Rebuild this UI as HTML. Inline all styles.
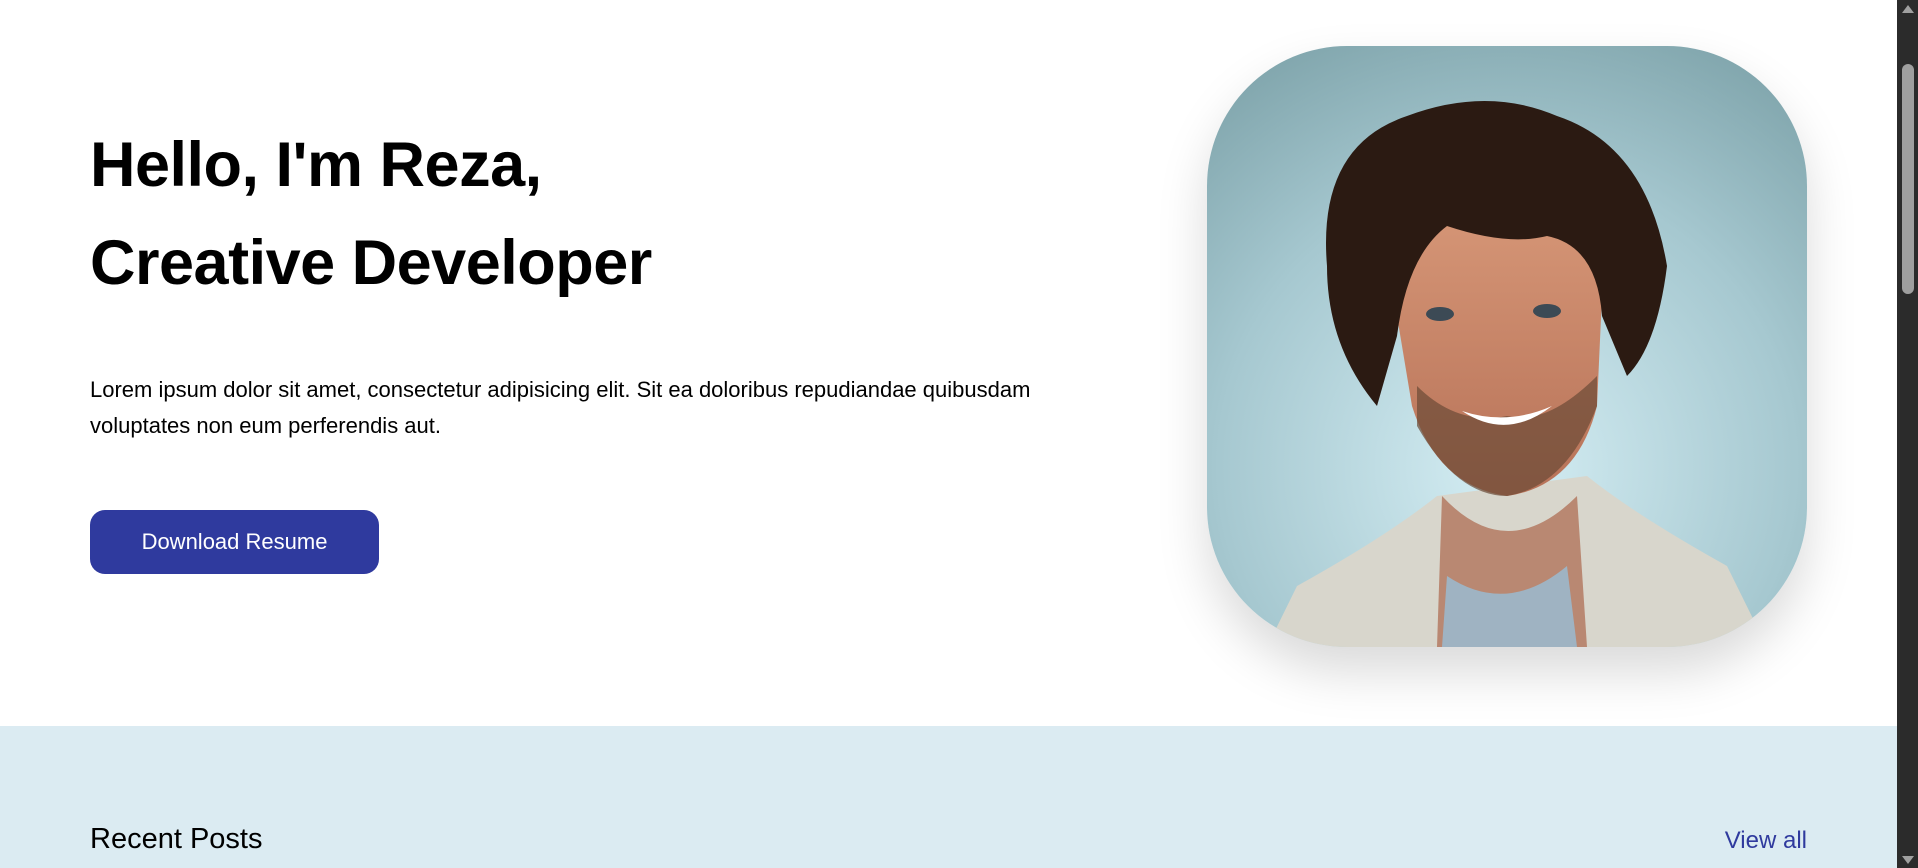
<!DOCTYPE html>
<html><head><meta charset="utf-8"><style>
html,body{margin:0;padding:0;}
body{width:1918px;height:868px;overflow:hidden;position:relative;background:#fff;font-family:"Liberation Sans",Arial,sans-serif;color:#000;}
h1{position:absolute;left:90px;top:116px;margin:0;font-size:63px;font-weight:700;line-height:98px;letter-spacing:-0.5px;}
p{position:absolute;left:90px;top:372px;margin:0;font-size:22px;line-height:36px;width:1000px;}
.btn{position:absolute;left:90px;top:510px;width:289px;height:64px;background:#2f3a9e;border-radius:15px;color:#fff;font-size:22px;line-height:64px;text-align:center;}
.img{position:absolute;left:1207px;top:46px;width:600px;height:601px;border-radius:140px;overflow:hidden;box-shadow:0 25px 50px rgba(0,0,0,0.15);}
.sec{position:absolute;left:0;top:726px;width:1897px;height:142px;background:#dbebf2;}
.rp{position:absolute;left:90px;top:823px;font-size:29px;}
.va{position:absolute;right:111px;top:827px;font-size:24px;color:#2f3a9e;}
.sb{position:absolute;left:1897px;top:0;width:21px;height:868px;background:#2b2b2b;}
.th{position:absolute;left:1902px;top:64px;width:12px;height:230px;background:#9f9f9f;border-radius:6px;}
.ar{position:absolute;left:1902px;top:5px;width:0;height:0;border-left:6px solid transparent;border-right:6px solid transparent;border-bottom:8px solid #a0a0a0;}
.ar2{position:absolute;left:1902px;top:856px;width:0;height:0;border-left:6px solid transparent;border-right:6px solid transparent;border-top:8px solid #a0a0a0;}
</style></head><body>
<h1>Hello, I'm Reza,<br>Creative Developer</h1>
<p>Lorem ipsum dolor sit amet, consectetur adipisicing elit. Sit ea doloribus repudiandae quibusdam voluptates non eum perferendis aut.</p>
<div class="btn">Download Resume</div>
<div class="img"><svg width="600" height="601" viewBox="0 0 600 601">
<defs><radialGradient id="bg" cx="0.5" cy="0.7" r="0.8"><stop offset="0" stop-color="#d5eef4"/><stop offset="0.6" stop-color="#a6c8d0"/><stop offset="1" stop-color="#7fa4ab"/></radialGradient>
<linearGradient id="sk" x1="0" y1="0" x2="0" y2="1"><stop offset="0" stop-color="#d99a7a"/><stop offset="1" stop-color="#b77258"/></linearGradient></defs>
<rect width="600" height="601" fill="url(#bg)"/>
<path d="M60 601 L90 540 Q180 490 230 450 L380 430 Q430 470 520 520 L560 601Z" fill="#d8d6cc"/>
<path d="M235 450 Q300 520 370 450 L380 601 L230 601Z" fill="#b98872"/>
<path d="M240 530 Q300 570 360 520 L370 601 L235 601Z" fill="#9fb3c2"/>
<path d="M185 240 Q185 140 290 130 Q395 140 395 250 L390 360 Q370 440 300 450 Q230 440 205 360Z" fill="url(#sk)"/>
<path d="M210 380 Q250 450 300 450 Q360 440 390 360 L390 330 Q340 380 300 370 Q250 380 210 340Z" fill="#6b4a36" opacity="0.7"/>
<path d="M120 220 Q110 100 200 70 Q280 40 350 70 Q440 100 460 220 Q450 300 420 330 L395 270 Q390 200 340 190 Q300 200 240 180 Q200 210 190 290 L170 360 Q120 300 120 220Z" fill="#2b1a12"/>
<ellipse cx="233" cy="268" rx="14" ry="7" fill="#3c4a55"/><ellipse cx="340" cy="265" rx="14" ry="7" fill="#3c4a55"/>
<path d="M255 365 Q300 395 345 360 Q300 380 255 365Z" fill="#fff"/>
</svg></div>
<div class="sec"></div>
<div class="rp">Recent Posts</div>
<div class="va">View all</div>
<div class="sb"></div><div class="th"></div><div class="ar"></div><div class="ar2"></div>
</body></html>
